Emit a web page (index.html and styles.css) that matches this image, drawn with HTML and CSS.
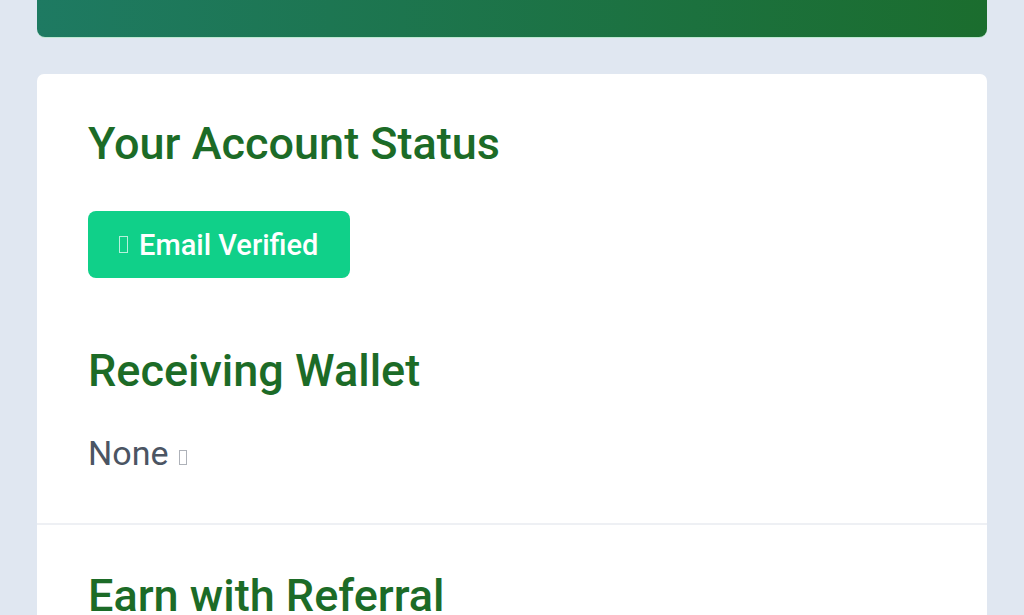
FILE: index.html
```html
<!DOCTYPE html>
<html>
	<head>
		<meta charset="utf-8">
		<title>Account</title>
		<link rel="stylesheet" href="styles.css">
	</head>
	<body>
		<div class="page">
			<div class="banner"></div>
			<div class="card">
				<div class="section">
					<h2>Your Account Status</h2>
					<span class="badge"><i class="tofu"></i>Email Verified</span>
					<h2 class="wallet-title">Receiving Wallet</h2>
					<p class="wallet">None <i class="tofu"></i></p>
				</div>
				<div class="section referral">
					<h2>Earn with Referral</h2>
				</div>
			</div>
		</div>
	</body>
</html>
```

FILE: styles.css
```css
html,body,h2,p{margin: 0; padding: 0;}
body{
	background: #e0e7f1;
	font-family: Roboto, "Noto Sans", sans-serif;
	overflow: hidden;
}
.page{
	padding: 0 37px;
	display: flex;
	flex-direction: column;
	gap: 37px;
}
.banner{
	height: 37px;
	border-radius: 0 0 8px 8px;
	background: linear-gradient(90deg, #1e7a62, #1b6d2e);
	box-shadow: 0 1px 0 #bfe8d2;
}
.card{
	background: #fff;
	border-radius: 7px;
}
.section{
	padding: 44px 51px 50px;
}
h2{
	font-size: 45px;
	font-weight: 500;
	color: #1c6b27;
	line-height: 52px;
}
.badge{
	display: inline-flex;
	align-items: center;
	margin-top: 41px;
	height: 67px;
	padding: 0 32px 0 31px;
	box-sizing: border-box;
	background: #10d089;
	color: #fff;
	border-radius: 8px;
	font-size: 29px;
	font-weight: 500;
}
.tofu{
	display: inline-block;
	width: 7px;
	height: 15px;
	border: 1px solid currentColor;
	margin-right: 11px;
	opacity: 0.7;
}
.wallet-title{
	margin-top: 67px;
}
.wallet{
	margin-top: 36px;
	font-size: 34px;
	line-height: 40px;
	color: #4b5563;
}
.wallet .tofu{
	width: 6px;
	height: 13px;
	margin-left: 2px;
	margin-right: 0;
	opacity: 0.45;
}
.referral{
	border-top: 2px solid #eef0f4;
	padding-top: 45px;
}
```
